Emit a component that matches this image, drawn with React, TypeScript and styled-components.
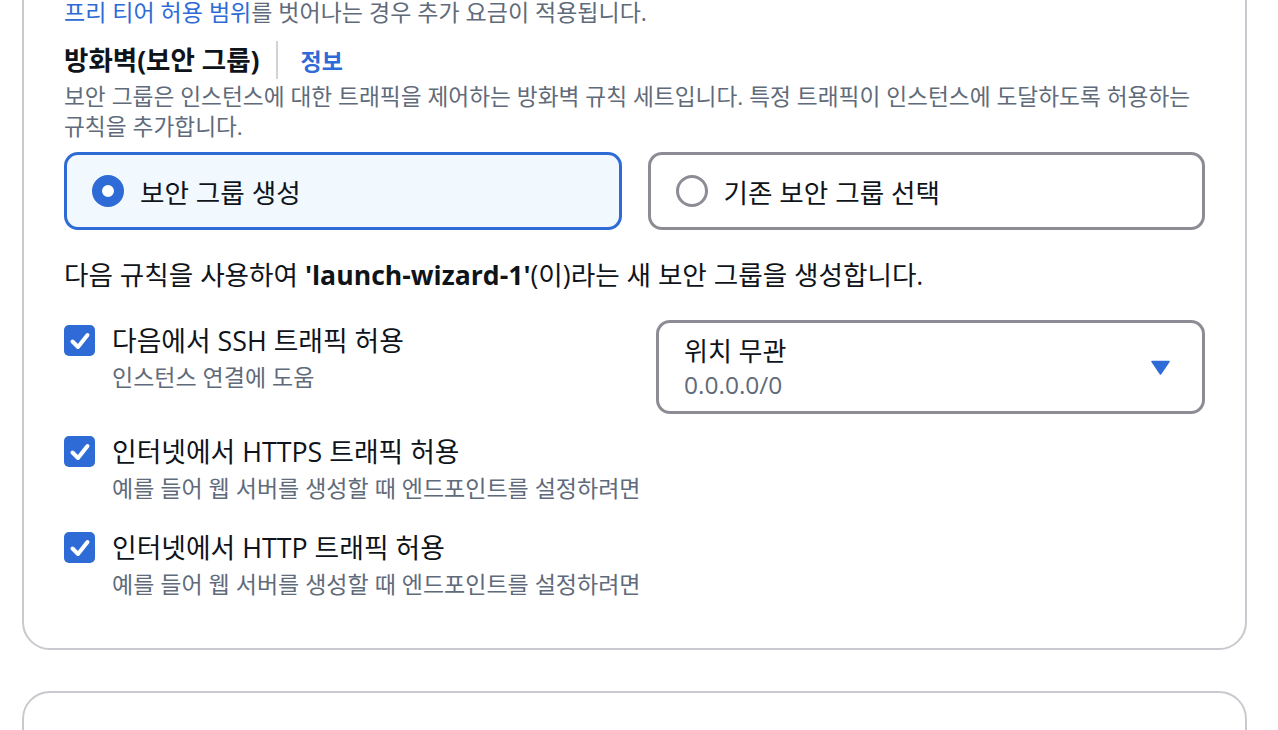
import React from "react";
import styled, { createGlobalStyle } from "styled-components";

const Global = createGlobalStyle`
  html, body { margin: 0; padding: 0; background: #ffffff; }
  body {
    font-family: "Open Sans", "Noto Sans CJK KR", sans-serif;
    color: #0f141a;
    overflow: hidden;
  }
`;

const BLUE = "#2e6bd6";
const GRAY_TEXT = "#5f6b7a";
const GRAY_BORDER = "#8c8c94";

const Page = styled.div`
  margin-top: -60px;
  padding: 0 31px 0 22px;
`;

const Card = styled.section`
  border: 2px solid #c9c9cf;
  border-radius: 28px;
  padding: 55px 40px 46px 40px;
`;

const NextCard = styled(Card)`
  margin-top: 41px;
  height: 200px;
`;

const Note = styled.p`
  margin: 0;
  font-size: 23px;
  line-height: 30px;
  color: ${GRAY_TEXT};
  white-space: nowrap;
`;

const Link = styled.span`
  color: ${BLUE};
`;

const HeaderRow = styled.div`
  display: flex;
  align-items: center;
  margin-top: 15px;
  height: 36px;
`;

const Heading = styled.h2`
  margin: 0;
  font-size: 26.5px;
  font-weight: 700;
  line-height: 36px;
`;

const Divider = styled.span`
  width: 2px;
  height: 38px;
  background: #d1d1d6;
  margin: 0 23px 0 16px;
`;

const InfoLink = styled.span`
  font-size: 23px;
  font-weight: 700;
  color: ${BLUE};
`;

const Description = styled.p`
  margin: 4px 0 0;
  font-size: 22.7px;
  line-height: 30px;
  color: ${GRAY_TEXT};
  word-break: keep-all;
`;

const Tiles = styled.div`
  display: grid;
  grid-template-columns: 1fr 1fr;
  gap: 26px;
  margin-top: 10px;
`;

const Tile = styled.div<{ $selected?: boolean }>`
  display: flex;
  align-items: center;
  gap: 16px;
  height: 78px;
  box-sizing: border-box;
  padding: 0 25px;
  border: 3px solid ${(p) => (p.$selected ? BLUE : GRAY_BORDER)};
  background: ${(p) => (p.$selected ? "#f1f8fe" : "#ffffff")};
  border-radius: 14px;
  font-size: 26.6px;
`;

const Radio = styled.span<{ $checked?: boolean }>`
  box-sizing: border-box;
  width: 32px;
  height: 32px;
  border-radius: 50%;
  flex: none;
  border: ${(p) => (p.$checked ? `10px solid ${BLUE}` : `3px solid ${GRAY_BORDER}`)};
  background: #ffffff;
`;

const RuleText = styled.p`
  margin: 27px 0 0;
  font-size: 26.6px;
  line-height: 36px;
  white-space: nowrap;
`;

const Strong = styled.b`
  font-weight: 700;
`;

const FirstRow = styled.div`
  display: grid;
  grid-template-columns: 1fr 549px;
  align-items: start;
  margin-top: 27px;
`;

const OptionRow = styled.div<{ $gap: number }>`
  display: flex;
  gap: 17px;
  margin-top: ${(p) => p.$gap}px;
`;

const OptionInFirst = styled.div`
  display: flex;
  gap: 17px;
  margin-top: 3px;
`;

const Checkbox = styled.span`
  width: 31px;
  height: 31px;
  border-radius: 5px;
  background: ${BLUE};
  margin-top: 2px;
  flex: none;
  display: flex;
  align-items: center;
  justify-content: center;
`;

const OptionText = styled.div`
  display: flex;
  flex-direction: column;
  white-space: nowrap;
`;

const OptionLabel = styled.span`
  font-size: 26.8px;
  line-height: 36px;
`;

const OptionDesc = styled.span`
  font-size: 23px;
  line-height: 36px;
  color: ${GRAY_TEXT};
`;

const Select = styled.div`
  box-sizing: border-box;
  height: 94px;
  border: 3px solid ${GRAY_BORDER};
  border-radius: 14px;
  padding: 0 32px 0 25px;
  display: flex;
  align-items: center;
  justify-content: space-between;
`;

const SelectText = styled.div`
  display: flex;
  flex-direction: column;
`;

const SelectValue = styled.span`
  font-size: 26px;
  line-height: 36px;
`;

const SelectSub = styled.span`
  font-size: 24.5px;
  line-height: 32px;
  color: ${GRAY_TEXT};
`;

const Check = () => (
  <svg width="24" height="24" viewBox="0 0 24 24">
    <polyline
      points="4.5,12.5 10,18 19.5,6"
      fill="none"
      stroke="#ffffff"
      strokeWidth="4"
      strokeLinecap="round"
      strokeLinejoin="round"
    />
  </svg>
);

const Caret = () => (
  <svg width="19" height="15" viewBox="0 0 19 15">
    <path d="M1 1.5 H18 L9.5 14 Z" fill={BLUE} stroke={BLUE} strokeWidth="1.5" strokeLinejoin="round" />
  </svg>
);

const Option = ({ label, desc }: { label: string; desc: string }) => (
  <>
    <Checkbox>
      <Check />
    </Checkbox>
    <OptionText>
      <OptionLabel>{label}</OptionLabel>
      <OptionDesc>{desc}</OptionDesc>
    </OptionText>
  </>
);

export default function App() {
  return (
    <>
      <Global />
      <Page>
        <Card>
          <Note>
            <Link>프리 티어 허용 범위</Link>를 벗어나는 경우 추가 요금이 적용됩니다.
          </Note>
          <HeaderRow>
            <Heading>방화벽(보안 그룹)</Heading>
            <Divider />
            <InfoLink>정보</InfoLink>
          </HeaderRow>
          <Description>
            보안 그룹은 인스턴스에 대한 트래픽을 제어하는 방화벽 규칙 세트입니다. 특정 트래픽이 인스턴스에 도달하도록 허용하는
            규칙을 추가합니다.
          </Description>
          <Tiles>
            <Tile $selected>
              <Radio $checked />
              보안 그룹 생성
            </Tile>
            <Tile>
              <Radio />
              기존 보안 그룹 선택
            </Tile>
          </Tiles>
          <RuleText>
            다음 규칙을 사용하여 <Strong>'launch-wizard-1'</Strong>(이)라는 새 보안 그룹을 생성합니다.
          </RuleText>
          <FirstRow>
            <OptionInFirst>
              <Option label="다음에서 SSH 트래픽 허용" desc="인스턴스 연결에 도움" />
            </OptionInFirst>
            <Select>
              <SelectText>
                <SelectValue>위치 무관</SelectValue>
                <SelectSub>0.0.0.0/0</SelectSub>
              </SelectText>
              <Caret />
            </Select>
          </FirstRow>
          <OptionRow $gap={20}>
            <Option
              label="인터넷에서 HTTPS 트래픽 허용"
              desc="예를 들어 웹 서버를 생성할 때 엔드포인트를 설정하려면"
            />
          </OptionRow>
          <OptionRow $gap={24}>
            <Option
              label="인터넷에서 HTTP 트래픽 허용"
              desc="예를 들어 웹 서버를 생성할 때 엔드포인트를 설정하려면"
            />
          </OptionRow>
        </Card>
        <NextCard />
      </Page>
    </>
  );
}
